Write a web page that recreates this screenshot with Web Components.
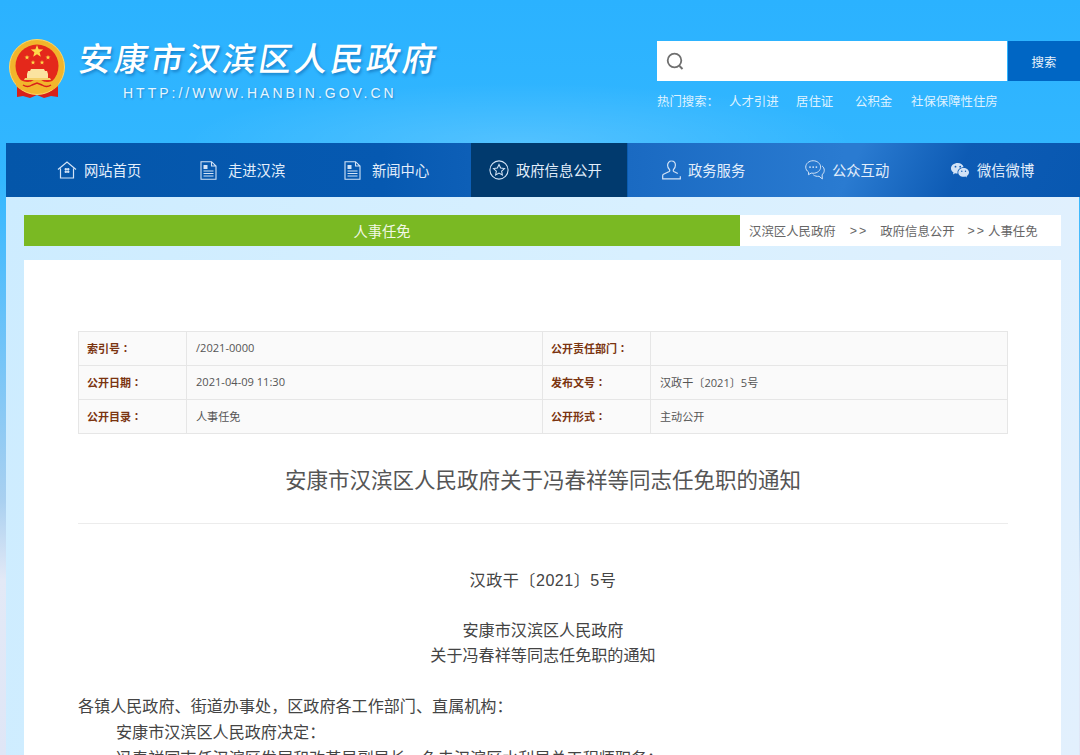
<!DOCTYPE html>
<html lang="zh-CN">
<head>
<meta charset="utf-8">
<title>安康市汉滨区人民政府</title>
<style>
  html, body { margin: 0; height: 755px; overflow: hidden; }
  body {
    font-family: "Liberation Sans", "Noto Sans CJK SC", sans-serif;
    background: linear-gradient(#2bb2ff 0, #33b7ff 180px, #6fc3f8 340px, #a9d0f0 500px, #e3e9f6 580px, #dfe6f6 755px);
  }
  /* centred punctuation, light DOM so a plain rule reaches it */
  article-body .p { font-family: "Noto Sans CJK TC", sans-serif; }
</style>
</head>
<body>
<site-header></site-header>
<site-nav>
  <nav-item icon="home" pad="15" style="width:144px">网站首页</nav-item>
  <nav-item icon="doc" pad="15" style="width:144px">走进汉滨</nav-item>
  <nav-item icon="doc" pad="15" style="width:141px">新闻中心</nav-item>
  <nav-item icon="star" pad="18" active style="width:157px">政府信息公开</nav-item>
  <nav-item icon="user" pad="33" style="width:144px">政务服务</nav-item>
  <nav-item icon="chat" pad="33" style="width:145px">公众互动</nav-item>
  <nav-item icon="wechat" pad="33" style="width:145px">微信微博</nav-item>
</site-nav>
<page-panel>
  <crumb-bar heading="人事任免">
    <span>汉滨区人民政府</span><b>&gt;&gt;</b><span>政府信息公开</span><b>&gt;&gt;</b><span>人事任免</span>
  </crumb-bar>
  <article-card>
    <info-table>
      <info-cell label="索引号">/2021-0000</info-cell>
      <info-cell label="公开责任部门"></info-cell>
      <info-cell label="公开日期">2021-04-09 11:30</info-cell>
      <info-cell label="发布文号">汉政干〔2021〕5号</info-cell>
      <info-cell label="公开目录">人事任免</info-cell>
      <info-cell label="公开形式">主动公开</info-cell>
    </info-table>
    <article-body heading="安康市汉滨区人民政府关于冯春祥等同志任免职的通知">
      <p class="c" style="letter-spacing:.5px">汉政干〔2021〕5号</p>
      <p class="c">安康市汉滨区人民政府<br>关于冯春祥等同志任免职的通知</p>
      <p>各镇人民政府<span class="p">、</span>街道办事处<span class="p">，</span>区政府各工作部门<span class="p">、</span>直属机构<span class="p">：</span><br>
      <span class="i">安康市汉滨区人民政府决定<span class="p">：</span></span><br>
      <span class="i">冯春祥同志任汉滨区发展和改革局副局长<span class="p">，</span>免去汉滨区水利局总工程师职务<span class="p">；</span></span></p>
    </article-body>
  </article-card>
</page-panel>

<script>
const CJK = `"Liberation Sans", "Noto Sans CJK SC", sans-serif`;

const ICONS = {
  home: `<svg width="20" height="18" viewBox="0 0 20 18" fill="none" stroke="currentColor" stroke-width="1.2">
    <path d="M1 8.5 10 1l9 7.500M3.500 7.500V17h13V7.500"/>
    <path d="M8 7.500h1.500v1.500H8zM10.500 7.500H12v1.500h-1.500zM8 10h1.500v1.500H8zM10.500 10H12v1.500h-1.500z" stroke-width=".8" fill="currentColor"/></svg>`,
  doc: `<svg style="margin-left:-5px" width="17" height="19" viewBox="0 0 17 19" fill="none" stroke="currentColor" stroke-width="1.1">
    <path d="M1 .7h10.500L16 5v13.300H1zM11.500.7V5H16"/>
    <path d="M3.500 4h4v4h-4z" fill="currentColor" stroke="none"/>
    <path d="M3.500 10h10M3.500 12.500h10M3.500 15h10"/></svg>`,
  star: `<svg width="22" height="22" viewBox="0 0 22 22" fill="none" stroke="currentColor" stroke-width="1.2">
    <circle cx="11" cy="11" r="10"/>
    <path d="m11 5 1.800 3.900 4.200.5-3.100 2.900.8 4.200L11 14.400l-3.700 2.100.8-4.200L5 9.400l4.200-.5z"/></svg>`,
  user: `<svg width="19" height="20" viewBox="0 0 19 20" fill="none" stroke="currentColor" stroke-width="1.2">
    <path d="M9.500 1C7 1 5.600 3 5.600 5.200c0 2 .9 3.500 2 4.500.3.600.2 1.400-.4 1.800L1.500 14.200c-.5.300-.8.700-.8 1.300v3.300h17.600v-2.600"/>
    <path d="M9.500 1c2.500 0 3.900 2 3.900 4.200 0 2-.9 3.500-2 4.500-.3.600-.2 1.400.4 1.800l4 2"/></svg>`,
  chat: `<svg width="22" height="22" viewBox="0 0 22 22" fill="none" stroke="currentColor" stroke-width="1.1">
    <path d="M9 .8C4.400.8.800 3.900.8 7.800c0 2.300 1.200 4.200 3.200 5.500l-.2 2.900 3-1.800c.7.100 1.400.2 2.200.2 4.600 0 8.200-3.100 8.200-6.800S13.600.8 9 .8z"/>
    <path d="M18.800 6.500c1.500 1.200 2.400 2.900 2.400 4.800 0 2-.9 3.700-2.400 4.900l.3 4.600-3.700-2.900c-2.400.3-4.500-.2-6.200-1.500"/>
    <g fill="currentColor" stroke="none"><circle cx="5.500" cy="7.800" r="1"/><circle cx="9" cy="7.800" r="1"/><circle cx="12.500" cy="7.800" r="1"/></g></svg>`,
  wechat: `<svg width="18" height="15" viewBox="0 0 18 15" fill="currentColor">
    <path fill-rule="evenodd" d="M6.800 0C3 0 0 2.400 0 5.400c0 1.700 1 3.200 2.500 4.200L1.900 11.500l2.200-1.200c.7.200 1.400.3 2.200.3.100 0 .3 0 .4 0-.1-.4-.2-.8-.2-1.200 0-2.900 2.700-5.100 6.100-5.100C12.100 1.700 9.700 0 6.800 0zM4.500 2.800a.9.900 0 1 1 0 1.800.9.900 0 0 1 0-1.800zm4.700 0a.9.900 0 1 1 0 1.800.9.900 0 0 1 0-1.800z"/>
    <path fill-rule="evenodd" d="M12.600 5C9.600 5 7.300 7 7.300 9.400s2.300 4.400 5.300 4.400c.6 0 1.200-.1 1.700-.2l1.800 1-.5-1.600c1.400-.8 2.400-2.100 2.400-3.600C18 7 15.600 5 12.600 5zm-1.800 2.500a.7.700 0 1 1 0 1.400.7.700 0 0 1 0-1.400zm3.700 0a.7.700 0 1 1 0 1.400.7.700 0 0 1 0-1.400z"/></svg>`
};

const STAR = (x, y, r) => {
  let pts = [];
  for (let i = 0; i < 10; i++) {
    const a = -Math.PI / 2 + i * Math.PI / 5;
    const d = i % 2 ? r * 0.42 : r;
    pts.push((x + d * Math.cos(a)).toFixed(1) + "," + (y + d * Math.sin(a)).toFixed(1));
  }
  return `<polygon points="${pts.join(" ")}" fill="#ffd94a"/>`;
};

class SiteEmblem extends HTMLElement {
  constructor() {
    super();
    this.attachShadow({ mode: "open" });
    this.shadowRoot.innerHTML = `
      <style>:host { display: block; width: 58px; height: 62px; } svg { display: block; }</style>
      <svg width="58" height="62" viewBox="0 0 58 62">
        <path d="M9 44h41v14l-7-1-7 2-7-3-7 3-7-2-6 1z" fill="#d8201a"/>
        <circle cx="29" cy="28" r="27.500" fill="#f2b52c"/>
        <circle cx="29" cy="28" r="27.500" fill="none" stroke="#ffd968" stroke-width="1"/>
        <circle cx="29" cy="27" r="21.500" fill="#e4281b"/>
        ${STAR(29, 12.500, 6.500)}${STAR(19, 18.500, 2.600)}${STAR(40, 18.500, 2.600)}${STAR(25, 23.500, 2.400)}${STAR(34, 23.500, 2.400)}
        <path d="M23 30h13l1 2h2l1 3v4H19v-4l1-3h2z" fill="#fbe3a0"/>
        <path d="M17 39h25l1 2H16z" fill="#f6d069"/>
        <path d="M8 40c4 0 7 3 11 3s5-1 7-2h7c2 1 3 2 7 2s7-3 11-3l-1 7c-4 4-9 5-13 4l-8-2-8 2c-4 1-9 0-13-4z" fill="#f2b52c"/>
        <path d="M15 46c3 2 6 2 9 0l5-2 5 2c3 2 6 2 9 0" fill="none" stroke="#d8201a" stroke-width="1.500"/>
      </svg>`;
  }
}
customElements.define("site-emblem", SiteEmblem);

class SearchBox extends HTMLElement {
  constructor() {
    super();
    this.attachShadow({ mode: "open" });
    this.shadowRoot.innerHTML = `
      <style>
        :host { display: block; width: 423px; font-family: ${CJK}; }
        .row { display: flex; height: 40px; }
        .field { flex: 0 0 350px; background: #fff; display: flex; align-items: center; padding-left: 9px; box-sizing: border-box; }
        .btn { flex: 1; margin-left: 1px; padding-top: 2px; box-sizing: border-box; background: #0066c4; color: #e8f2fb; font-size: 12.400px; display: flex; align-items: center; justify-content: center; }
        .hot { display: flex; margin-top: 12px; font-size: 12.400px; line-height: 18px; color: #dff2ff; }
        .hot span:nth-child(1) { width: 72px; }
        .hot span:nth-child(2) { width: 67px; }
        .hot span:nth-child(3) { width: 59px; }
        .hot span:nth-child(4) { width: 56px; }
      </style>
      <div class="row">
        <div class="field">
          <svg width="19" height="19" viewBox="0 0 19 19" fill="none" stroke="#6f6f6f" stroke-width="1.800">
            <circle cx="8.500" cy="8.500" r="6.800"/><path d="m13.500 14 3 3" stroke-width="2"/>
          </svg>
        </div>
        <div class="btn">搜索</div>
      </div>
      <div class="hot"><span>热门搜索：</span><span>人才引进</span><span>居住证</span><span>公积金</span><span>社保保障性住房</span></div>`;
  }
}
customElements.define("search-box", SearchBox);

class SiteHeader extends HTMLElement {
  constructor() {
    super();
    this.attachShadow({ mode: "open" });
    this.shadowRoot.innerHTML = `
      <style>
        :host {
          display: block; height: 143px; box-sizing: border-box; padding: 38px 0 0 8px; font-family: ${CJK};
          background: radial-gradient(340px 60px at 520px 143px, rgba(255, 255, 255, .16), transparent);
        }
        .wrap { display: flex; }
        .logo { display: flex; gap: 9px; width: 649px; }
        site-emblem { margin-top: 1px; }
        h1 {
          margin: 0; font-size: 33px; line-height: 44px; font-weight: 500; color: #fff; letter-spacing: 3px;
          white-space: nowrap; transform: skewX(-10deg); transform-origin: left bottom;
          text-shadow: 2px 2px 3px rgba(0, 70, 140, .45);
        }
        .url {
          margin: 3px 0 0 48px; font: 14px/16px "Liberation Sans", sans-serif; letter-spacing: 3px; color: #e6f6ff;
          white-space: nowrap; text-shadow: 1px 1px 2px rgba(0, 70, 140, .4);
        }
        search-box { margin-top: 3px; }
      </style>
      <div class="wrap">
        <div class="logo">
          <site-emblem></site-emblem>
          <div>
            <h1>安康市汉滨区人民政府</h1>
            <p class="url">HTTP://WWW.HANBIN.GOV.CN</p>
          </div>
        </div>
        <search-box></search-box>
      </div>`;
  }
}
customElements.define("site-header", SiteHeader);

class SiteNav extends HTMLElement {
  constructor() {
    super();
    this.attachShadow({ mode: "open" });
    this.shadowRoot.innerHTML = `
      <style>
        :host {
          display: flex; height: 54px; margin: 0 0 0 6px; padding-left: 36px;
          background:
            linear-gradient(115deg, transparent 78%, rgba(4, 80, 170, .75) 88%, rgba(6, 86, 175, .95) 100%),
            linear-gradient(90deg, #0456a9 0, #0659b1 35%, #1a6ac2 58%, #2a7bd1 78%, #2a7bd1 100%);
        }
      </style>
      <slot></slot>`;
  }
}
customElements.define("site-nav", SiteNav);

class NavItem extends HTMLElement {
  constructor() {
    super();
    this.attachShadow({ mode: "open" });
    const pad = this.getAttribute("pad") || 15;
    this.shadowRoot.innerHTML = `
      <style>
        :host {
          display: flex; align-items: center; gap: 7px; box-sizing: border-box; padding-left: ${pad}px;
          color: #e3eefb; font: 14.300px/20px ${CJK}; white-space: nowrap;
        }
        :host([active]) { background: #013a6e; border-right: 1px solid #0a5cb0; }
        .ic { width: 20px; display: flex; justify-content: center; flex: none; color: #d3e3f6; }
        slot { display: block; margin-top: 2px; }
      </style>
      <span class="ic">${ICONS[this.getAttribute("icon")]}</span>
      <slot></slot>`;
  }
}
customElements.define("nav-item", NavItem);

class PagePanel extends HTMLElement {
  constructor() {
    super();
    this.attachShadow({ mode: "open" });
    this.shadowRoot.innerHTML = `
      <style>
        :host {
          display: block; margin: 0 1px 0 6px; padding: 18px 18px 0; height: 558px; box-sizing: border-box;
          background: linear-gradient(100deg, #cdecff 0, #d8f0ff 55%, #e2f0fd 100%);
        }
      </style>
      <slot></slot>`;
  }
}
customElements.define("page-panel", PagePanel);

class CrumbBar extends HTMLElement {
  constructor() {
    super();
    this.attachShadow({ mode: "open" });
    this.shadowRoot.innerHTML = `
      <style>
        :host { display: flex; height: 31px; font-family: ${CJK}; }
        .title { flex: 0 0 716px; background: #7ab923; color: #f2f8e6; font-size: 14.300px; display: flex; align-items: center; justify-content: center; }
        .path { flex: 1; background: #fff; color: #666; font-size: 12.400px; display: flex; align-items: center; padding-left: 9px; white-space: nowrap; }
        ::slotted(b) { font-weight: 400; letter-spacing: 2px; margin: 0 12px 0 14px; }
        ::slotted(b:last-of-type) { margin: 0 2px 0 13px; }
      </style>
      <div class="title">${this.getAttribute("heading")}</div>
      <div class="path"><slot></slot></div>`;
  }
}
customElements.define("crumb-bar", CrumbBar);

class ArticleCard extends HTMLElement {
  constructor() {
    super();
    this.attachShadow({ mode: "open" });
    this.shadowRoot.innerHTML = `
      <style>
        :host { display: block; margin-top: 14px; height: 600px; padding: 71px 53px 0 54px; background: #fff; box-sizing: border-box; width: 1037px; }
      </style>
      <slot></slot>`;
  }
}
customElements.define("article-card", ArticleCard);

class InfoTable extends HTMLElement {
  constructor() {
    super();
    this.attachShadow({ mode: "open" });
    this.shadowRoot.innerHTML = `
      <style>
        :host {
          display: grid; grid-template-columns: 108px 356px 108px 1fr; grid-auto-rows: 34px;
          width: 930px; box-sizing: border-box; background: #fafafa;
          border-top: 1px solid #e6e6e6; border-left: 1px solid #e6e6e6;
        }
      </style>
      <slot></slot>`;
  }
}
customElements.define("info-table", InfoTable);

class InfoCell extends HTMLElement {
  constructor() {
    super();
    this.attachShadow({ mode: "open" });
    this.shadowRoot.innerHTML = `
      <style>
        :host { display: contents; font-family: ${CJK}; }
        div { display: flex; align-items: center; box-sizing: border-box; padding-bottom: 2px; font-size: 11px; border-right: 1px solid #e6e6e6; border-bottom: 1px solid #e6e6e6; white-space: nowrap; }
        .l { padding-left: 8px; color: #7a3410; font-weight: 700; }
        .l i { font-style: normal; font-family: "Noto Sans CJK TC", sans-serif; }
        .v { padding-left: 9px; color: #555; font-family: "Open Sans", "Noto Sans CJK SC", sans-serif; font-size: 11.100px; }
      </style>
      <div class="l">${this.getAttribute("label")}<i>：</i></div>
      <div class="v"><slot></slot></div>`;
  }
}
customElements.define("info-cell", InfoCell);

class ArticleBody extends HTMLElement {
  constructor() {
    super();
    this.attachShadow({ mode: "open" });
    this.shadowRoot.innerHTML = `
      <style>
        :host { display: block; width: 930px; font-family: ${CJK}; color: #444; }
        h2 { margin: 31px 0 0; padding-bottom: 26px; text-align: center; font-size: 21.500px; line-height: 32px; font-weight: 400; color: #555; border-bottom: 1px solid #ececec; }
        .text { padding-top: 44px; font-size: 16.100px; line-height: 25px; }
        ::slotted(p) { margin: 0 0 25px; }
        ::slotted(p.c) { text-align: center; }
      </style>
      <h2>${this.getAttribute("heading")}</h2>
      <div class="text"><slot></slot></div>`;
    // slotted rules do not reach spans inside the paragraphs
    this.querySelectorAll(".i").forEach((el) => {
      el.style.marginLeft = "38px";
    });
  }
}
customElements.define("article-body", ArticleBody);
</script>
</body>
</html>
